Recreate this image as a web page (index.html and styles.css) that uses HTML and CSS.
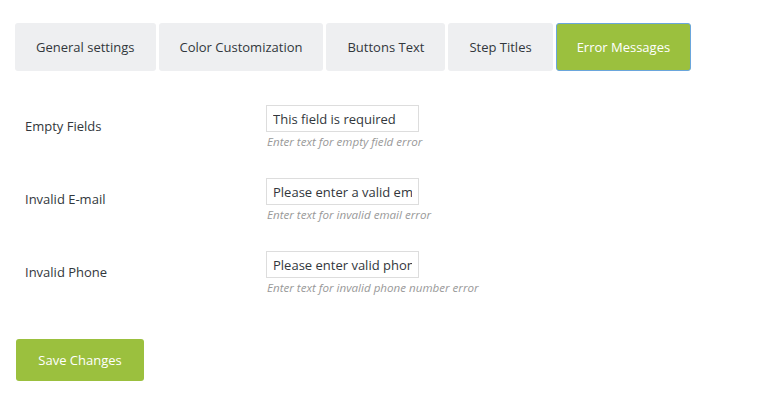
FILE: index.html
```html
<!DOCTYPE html>
<html>
<head>
<meta charset="utf-8">
<link rel="stylesheet" href="styles.css">
</head>
<body>
<div class="wrap">
  <nav class="tabs">
    <a class="tab">General settings</a>
    <a class="tab">Color Customization</a>
    <a class="tab">Buttons Text</a>
    <a class="tab">Step Titles</a>
    <a class="tab active">Error Messages</a>
  </nav>
  <form class="form">
    <div class="row">
      <label class="label">Empty Fields</label>
      <div class="field">
        <input class="input" type="text" value="This field is required">
        <p class="desc">Enter text for empty field error</p>
      </div>
    </div>
    <div class="row">
      <label class="label">Invalid E-mail</label>
      <div class="field">
        <input class="input" type="text" value="Please enter a valid email">
        <p class="desc">Enter text for invalid email error</p>
      </div>
    </div>
    <div class="row">
      <label class="label">Invalid Phone</label>
      <div class="field">
        <input class="input" type="text" value="Please enter valid phone">
        <p class="desc">Enter text for invalid phone number error</p>
      </div>
    </div>
    <div class="actions">
      <button class="save" type="button">Save Changes</button>
    </div>
  </form>
</div>
</body>
</html>
```
FILE: styles.css
```css
html, body {
  margin: 0;
  padding: 0;
  background: #ffffff;
}
body {
  font-family: "Open Sans", "Noto Sans", "Liberation Sans", sans-serif;
  font-size: 13px;
  color: #32373c;
}
.wrap {
  padding: 23px 0 0 15px;
}
.tabs {
  display: flex;
  gap: 3px;
}
.tab {
  display: flex;
  align-items: center;
  height: 48px;
  box-sizing: border-box;
  padding: 0 21px;
  background: #eeeff1;
  border-radius: 3px;
  color: #32373c;
  font-size: 13px;
}
.tab.active {
  background: #9bc03e;
  color: #ffffff;
  border: 1px solid #6aa6dc;
  padding: 0 20px;
}
.form {
  margin: 0;
  padding-top: 34px;
}
.row {
  display: grid;
  grid-template-columns: 251px auto;
  height: 73px;
}
.label {
  padding: 11px 0 0 10px;
  line-height: 20px;
}
.field {
  display: flex;
  flex-direction: column;
}
.input {
  width: 153px;
  height: 27px;
  box-sizing: border-box;
  border: 1px solid #dddddd;
  border-radius: 0;
  padding: 0 6px;
  font-family: inherit;
  font-size: 13px;
  color: #32373c;
  background: #fff;
  margin: 0;
}
.desc {
  margin: 1px 0 0 1px;
  font-size: 11.6px;
  line-height: 17px;
  font-style: italic;
  color: #999999;
}
.actions {
  padding: 15px 0 0 1px;
}
.save {
  width: 128px;
  height: 42px;
  background: #9bc03e;
  color: #ffffff;
  border: none;
  border-radius: 3px;
  font-family: inherit;
  font-size: 13px;
  padding: 0;
}
```
